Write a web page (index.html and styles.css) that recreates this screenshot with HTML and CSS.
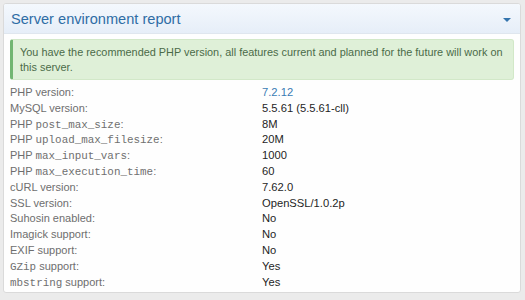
FILE: index.html
```html
<!DOCTYPE html>
<html>
<head>
<meta charset="utf-8">
<link rel="stylesheet" href="styles.css">
</head>
<body>
<div class="panel">
  <div class="panel-header">
    <h2 class="panel-title">Server environment report</h2>
    <span class="caret"></span>
  </div>
  <div class="panel-body">
    <div class="alert">You have the recommended PHP version, all features current and planned for the future will work on this server.</div>
    <dl class="pairs">
      <dt>PHP version:</dt><dd><a class="link">7.2.12</a></dd>
      <dt>MySQL version:</dt><dd>5.5.61 (5.5.61-cll)</dd>
      <dt>PHP <code>post_max_size</code>:</dt><dd>8M</dd>
      <dt>PHP <code>upload_max_filesize</code>:</dt><dd>20M</dd>
      <dt>PHP <code>max_input_vars</code>:</dt><dd>1000</dd>
      <dt>PHP <code>max_execution_time</code>:</dt><dd>60</dd>
      <dt>cURL version:</dt><dd>7.62.0</dd>
      <dt>SSL version:</dt><dd>OpenSSL/1.0.2p</dd>
      <dt>Suhosin enabled:</dt><dd>No</dd>
      <dt>Imagick support:</dt><dd>No</dd>
      <dt>EXIF support:</dt><dd>No</dd>
      <dt><code>GZip</code> support:</dt><dd>Yes</dd>
      <dt><code>mbstring</code> support:</dt><dd>Yes</dd>
    </dl>
  </div>
</div>
</body>
</html>
```
FILE: styles.css
```css
html, body {
  margin: 0;
  padding: 0;
}
body {
  background: #ebebeb;
  font-family: "Liberation Sans", Arial, sans-serif;
  padding: 3px 4px 7px 3px;
  height: 300px;
  box-sizing: border-box;
}
.panel {
  background: #fefefe;
  border: 1px solid #dadada;
  border-radius: 3px;
  height: 290px;
  box-sizing: border-box;
  overflow: hidden;
}
.panel-header {
  display: flex;
  align-items: center;
  justify-content: space-between;
  height: 30px;
  box-sizing: border-box;
  padding: 0 9px 0 7px;
  background: linear-gradient(#f4f8fd, #e6eef8);
  border-bottom: 1px solid #dfe6ee;
}
.panel-title {
  margin: 0;
  font-weight: normal;
  font-size: 14.6px;
  color: #2f6da5;
}
.caret {
  width: 0;
  height: 0;
  border-left: 4px solid transparent;
  border-right: 4px solid transparent;
  border-top: 4px solid #3474ad;
  margin-top: 2px;
}
.panel-body {
  padding: 5px 6px 0 6px;
}
.alert {
  background: #dff0d8;
  border: 1px solid #d2e8c8;
  border-left: 3px solid #72b672;
  border-radius: 3px;
  color: #4b6b48;
  font-size: 10.9px;
  line-height: 15px;
  padding: 5px 3px 4px 7px;
}
.pairs {
  display: grid;
  grid-template-columns: 252px 1fr;
  grid-auto-rows: 15.8px;
  margin: 5px 0 0 0;
  font-size: 11px;
  line-height: 15.8px;
}
.pairs dt {
  color: #6e6e6e;
  margin: 0;
}
.pairs dd {
  color: #1e1e1e;
  margin: 0;
  font-size: 11.2px;
}
.pairs code {
  font-family: "Liberation Mono", "Courier New", monospace;
  font-size: 10.9px;
  line-height: 1;
  color: #707070;
}
.link {
  color: #3a7bb4;
}
```
